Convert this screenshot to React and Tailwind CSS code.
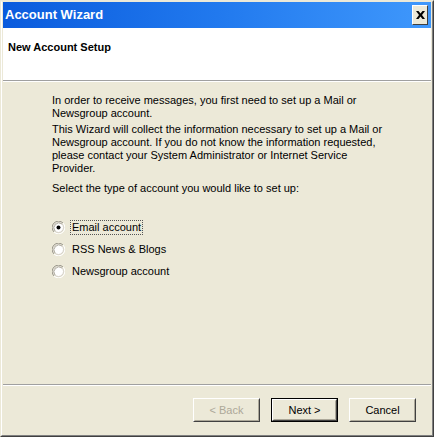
const FONT = { fontFamily: '"Liberation Sans", Arial, sans-serif' };

const OPTIONS = [
  { key: "email", label: "Email account", checked: true },
  { key: "rss", label: "RSS News & Blogs" },
  { key: "news", label: "Newsgroup account" },
];

function Radio({ checked }) {
  return (
    <svg width="13" height="13" viewBox="0 0 13 13" className="shrink-0">
      <path d="M11 2 A6 6 0 0 0 2 11" stroke="#9a978c" strokeWidth="1" fill="none" />
      <path d="M2 11 A6 6 0 0 0 11 2" stroke="#ffffff" strokeWidth="1" fill="none" />
      <circle cx="6.5" cy="6.5" r="5" fill="#ffffff" stroke="#d4d0c8" strokeWidth="1" />
      <path d="M10 3 A5 5 0 0 0 3 10" stroke="#b5b2a7" strokeWidth="1" fill="none" />
      {checked && <circle cx="6.5" cy="6.5" r="2" fill="#000000" />}
    </svg>
  );
}

function Button({ children, disabled, primary }) {
  return (
    <div className={`h-[24px] w-[67px] ${primary ? "border border-black" : ""}`}>
      <div className="h-full w-full border border-t-white border-l-white border-r-[#404040] border-b-[#404040] bg-[#ECE9D8]">
        <div className="flex h-full w-full items-center justify-center border border-t-[#ECE9D8] border-l-[#ECE9D8] border-r-[#ACA899] border-b-[#ACA899] text-[11px]">
          <span className={disabled ? "text-[#ACA899]" : "text-black"}>{children}</span>
        </div>
      </div>
    </div>
  );
}

export default function App() {
  return (
    <div className="h-[437px] w-[434px] overflow-hidden" style={FONT}>
      <div className="h-full w-full border-t border-l border-t-[#ECE9D8] border-l-[#ECE9D8] border-r border-b border-r-[#404040] border-b-[#404040]">
        <div className="flex h-full w-full flex-col border border-t-transparent border-l-white border-r-[#808080] border-b-[#808080] bg-[#ECE9D8] pl-px pr-px pb-px">
          {/* title bar */}
          <div className="flex h-[26px] shrink-0 items-center justify-between bg-gradient-to-r from-[#0A5BDD] via-[#2179EE] to-[#3F98FC] pl-[2px] pr-[2px]">
            <span className="text-[13px] font-bold text-white">Account Wizard</span>
            <div className="mr-px flex h-[20px] w-[16px] items-center justify-center border border-t-white border-l-white border-r-[#404040] border-b-[#404040] bg-[#ECE9D8]">
              <svg width="9" height="8" viewBox="0 0 9 8">
                <path d="M0 0h2.5l2 2.5 2-2.5H9L6 4l3 4H6.5l-2-2.5-2 2.5H0l3-4z" fill="#000" />
              </svg>
            </div>
          </div>

          {/* header */}
          <div className="flex h-[52px] shrink-0 items-center bg-white pl-[5px] pb-[14px]">
            <span className="text-[11px] font-bold text-black">New Account Setup</span>
          </div>
          <div className="h-px shrink-0 bg-[#A0A0A0]" />
          <div className="h-px shrink-0 bg-white" />

          {/* body */}
          <div className="flex flex-1 flex-col pl-[49px] pt-[12px] text-[11px] leading-[13px] text-black">
            <p>
              In order to receive messages, you first need to set up a Mail or
              <br />
              Newsgroup account.
            </p>
            <p className="mt-[3px]">
              This Wizard will collect the information necessary to set up a Mail or
              <br />
              Newsgroup account. If you do not know the information requested,
              <br />
              please contact your System Administrator or Internet Service
              <br />
              Provider.
            </p>
            <p className="mt-[7px]">Select the type of account you would like to set up:</p>

            <div className="mt-[26px] flex flex-col gap-[9px]">
              {OPTIONS.map((o) => (
                <div key={o.key} className="flex h-[13px] items-center">
                  <Radio checked={o.checked} />
                  <span
                    className={`ml-[6px] px-px ${o.checked ? "outline outline-1 outline-dotted outline-[#555]" : ""}`}
                  >
                    {o.label}
                  </span>
                </div>
              ))}
            </div>
          </div>

          {/* footer */}
          <div className="h-px shrink-0 bg-[#A0A0A0]" />
          <div className="h-px shrink-0 bg-white" />
          <div className="flex h-[48px] shrink-0 items-start justify-end gap-[11px] pr-[15px] pt-[12px]">
            <Button disabled>&lt; Back</Button>
            <Button primary>Next &gt;</Button>
            <Button>Cancel</Button>
          </div>
        </div>
      </div>
    </div>
  );
}
